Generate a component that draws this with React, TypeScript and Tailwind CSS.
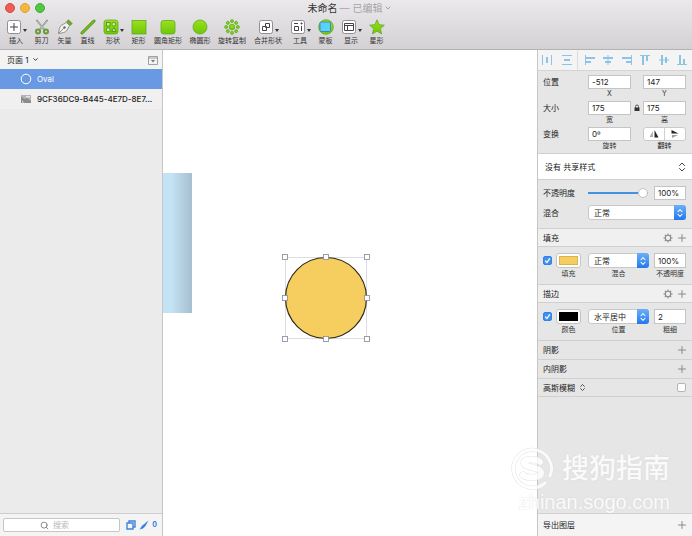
import { ReactNode, useState } from 'react';
import { ChevronDown, ChevronsUpDown, Plus, Search } from 'lucide-react';

function Swatch({ children }: { children: ReactNode }) {
  return (
    <svg viewBox="0 0 16 16" className="size-4 shrink-0">
      <defs>
        <linearGradient id="green" x1="0" y1="0" x2="0" y2="1">
          <stop offset="0" stopColor="#9be01c" />
          <stop offset="1" stopColor="#6cc808" />
        </linearGradient>
      </defs>
      {children}
    </svg>
  );
}

function Boxed({ children }: { children: ReactNode }) {
  return (
    <Swatch>
      <rect x="1.5" y="1.5" width="13" height="13" rx="2" fill="#fff" stroke="#8f8f8f" />
      <g fill="none" stroke="#444" strokeWidth="1">
        {children}
      </g>
    </Swatch>
  );
}

const greenStroke = { fill: 'url(#green)', stroke: '#62a829', strokeWidth: 0.8 };
const dots = [0, 45, 90, 135, 180, 225, 270, 315];

const tools = [
  {
    label: '插入',
    width: 'w-7',
    menu: true,
    icon: (
      <Boxed>
        <path d="M8 4v8M4 8h8" />
      </Boxed>
    ),
  },
  {
    label: '剪刀',
    width: 'w-[23px]',
    icon: (
      <Swatch>
        <path d="M2.5 1 10.5 11M13.5 1 5.5 11" stroke="#858b82" strokeWidth="1.8" fill="none" />
        <path d="M3 1.8 10 10.5M13 1.8 6 10.5" stroke="#d5dad2" strokeWidth=".7" fill="none" />
        <g fill="none" stroke="#6a9c35" strokeWidth="2">
          <circle cx="4" cy="12.5" r="2" />
          <circle cx="12" cy="12.5" r="2" />
        </g>
      </Swatch>
    ),
  },
  {
    label: '矢量',
    width: 'w-[23px]',
    icon: (
      <Swatch>
        <path d="M1.5 14.5C2 11 2.5 8 4 6.500L9.500 3.500 12.500 6.500 9.500 12C8 13.500 5 14 1.500 14.500Z" fill="#f1f2ee" stroke="#84907c" strokeWidth=".9" />
        <path d="M1.5 14.5 6.8 9.2" stroke="#777" strokeWidth=".8" />
        <circle cx="7.5" cy="8.5" r="1.2" fill="#666" />
        <path d="M9.5 2.8 11.5 .8 15.2 4.5 13.2 6.5Z" fill="#6bab25" stroke="#4c8419" strokeWidth=".6" />
      </Swatch>
    ),
  },
  {
    label: '直线',
    width: 'w-[23px]',
    icon: (
      <Swatch>
        <path d="M2 14 14 2" stroke="#4b8c15" strokeWidth="3" strokeLinecap="round" />
        <path d="M2 14 14 2" stroke="#79c516" strokeWidth="1.6" strokeLinecap="round" />
      </Swatch>
    ),
  },
  {
    label: '形状',
    width: 'w-7',
    menu: true,
    icon: (
      <Swatch>
        <rect x="1" y="1" width="14" height="14" rx="2.5" {...greenStroke} />
        <g fill="#c9f08f" stroke="#4a8a15" strokeWidth=".8">
          <rect x="3.5" y="3.5" width="3.5" height="3.5" />
          <circle cx="10.8" cy="5.2" r="1.9" />
          <rect x="3.5" y="9" width="3.5" height="3.5" rx="1" />
          <path d="m10.8 8.7 2.1 3.8H8.7Z" />
        </g>
      </Swatch>
    ),
  },
  {
    label: '矩形',
    width: 'w-[23px]',
    icon: (
      <Swatch>
        <rect x="1" y="1.5" width="14" height="13.5" {...greenStroke} />
      </Swatch>
    ),
  },
  {
    label: '圆角矩形',
    width: 'w-9',
    icon: (
      <Swatch>
        <rect x="1" y="1.5" width="14" height="13.5" rx="2.5" {...greenStroke} />
      </Swatch>
    ),
  },
  {
    label: '椭圆形',
    width: 'w-7',
    icon: (
      <Swatch>
        <circle cx="8" cy="8" r="7" {...greenStroke} />
      </Swatch>
    ),
  },
  {
    label: '旋转复制',
    width: 'w-9',
    icon: (
      <Swatch>
        <circle cx="8" cy="8" r="2.8" {...greenStroke} />
        {dots.map(angle => (
          <circle key={angle} cx="8" cy="2.1" r="1.5" transform={`rotate(${angle} 8 8)`} {...greenStroke} />
        ))}
      </Swatch>
    ),
  },
  {
    label: '合并形状',
    width: 'w-9',
    menu: true,
    icon: (
      <Boxed>
        <path d="M7.5 4.5h4v4h-4zM4.5 7.5h4v4h-4z" />
      </Boxed>
    ),
  },
  {
    label: '工具',
    width: 'w-7',
    menu: true,
    icon: (
      <Boxed>
        <path d="M4.5 7.5h4v4h-4zM4 4.5h4M11.5 7v5" />
        <path d="M10.5 4.5h2M11.5 3.5v2" />
      </Boxed>
    ),
  },
  {
    label: '蒙板',
    width: 'w-[23px]',
    icon: (
      <Swatch>
        <circle cx="8" cy="8" r="7.3" {...greenStroke} />
        <rect x="2" y="3" width="10.5" height="9.5" rx="1" fill="#5fd0f5" stroke="#2c7fb5" strokeWidth=".8" />
      </Swatch>
    ),
  },
  {
    label: '显示',
    width: 'w-7',
    menu: true,
    icon: (
      <Boxed>
        <path d="M3.5 4.5h9v7h-9zM3.5 6.5h9M6.5 6.5v5" />
      </Boxed>
    ),
  },
  {
    label: '星形',
    width: 'w-[23px]',
    icon: (
      <Swatch>
        <path d="m8 .8 2.1 4.9 5.2.5-3.9 3.5 1.2 5.2L8 12.2l-4.6 2.7 1.2-5.2L.7 6.2l5.2-.5Z" {...greenStroke} />
      </Swatch>
    ),
  },
];

// line is the guide, bars are the shapes lined up on it
const distributors = [
  { name: '水平分布', line: 'M1.5 1v10M10.5 1v10', bars: 'M6 3v6' },
  { name: '垂直分布', line: 'M1 1.5h10M1 10.5h10', bars: 'M3 6h6' },
];

const aligners = [
  { name: '左对齐', line: 'M1.5 1v10', bars: 'M2 4h9M2 8h5' },
  { name: '水平居中', line: 'M6 1v10', bars: 'M1 4h10M3 8h6' },
  { name: '右对齐', line: 'M10.5 1v10', bars: 'M1 4h9M5 8h5' },
  { name: '顶对齐', line: 'M1 1.5h10', bars: 'M4 2v9M8 2v5' },
  { name: '垂直居中', line: 'M1 6h10', bars: 'M4 1v10M8 3v6' },
  { name: '底对齐', line: 'M1 10.5h10', bars: 'M4 1v9M8 5v5' },
];

function AlignButton({ name, line, bars }: { name: string; line: string; bars: string }) {
  return (
    <button type="button" aria-label={name}>
      <svg viewBox="0 0 12 12" className="size-3" fill="none" stroke="#8dc3e4">
        <path d={line} strokeWidth="1" />
        <path d={bars} strokeWidth="2" />
      </svg>
    </button>
  );
}

function Field({ id, value, caption }: { id: string; value: string; caption: string }) {
  return (
    <div className="flex flex-col">
      <input
        id={id}
        defaultValue={value}
        className="h-[14px] w-full border border-[#c4c4c4] bg-white pl-[3px] text-[8px] leading-[10px] text-[#222] focus:outline-none"
      />
      <Caption id={id}>{caption}</Caption>
    </div>
  );
}

function Caption({ id, children }: { id: string; children: ReactNode }) {
  return (
    <label htmlFor={id} className="text-center text-[7px] leading-[10px] whitespace-nowrap text-[#333]">
      {children}
    </label>
  );
}

function Dropdown({ id, value, options }: { id: string; value: string; options: string[] }) {
  return (
    <div className="relative h-[15px]">
      <select
        id={id}
        defaultValue={value}
        className="block h-full w-full appearance-none rounded-[3px] border border-[#c8c8c8] bg-white pl-[5px] text-[8px] leading-[12px] text-[#222] focus:outline-none"
      >
        {options.map(option => (
          <option key={option}>{option}</option>
        ))}
      </select>
      <span className="pointer-events-none absolute inset-y-0 right-0 flex w-3 items-center justify-center rounded-r-[3px] bg-linear-to-b from-[#6bb0f8] to-[#2277ee] text-white">
        <ChevronsUpDown className="size-[10px]" strokeWidth={2.5} />
      </span>
    </div>
  );
}

function Tick({ id, label, checked = false }: { id: string; label: string; checked?: boolean }) {
  return (
    <span className="grid size-[9px] place-items-center *:col-start-1 *:row-start-1">
      <input
        id={id}
        type="checkbox"
        aria-label={label}
        defaultChecked={checked}
        className="peer size-[9px] appearance-none rounded-[2px] border border-[#b5b5b5] bg-white checked:border-[#3183ea] checked:bg-[#3d8ff0]"
      />
      <svg
        viewBox="0 0 9 9"
        className="pointer-events-none invisible size-[9px] peer-checked:visible"
        fill="none"
        stroke="#fff"
        strokeWidth="1.3"
      >
        <path d="m2.2 4.6 1.7 1.8 3-4" />
      </svg>
    </span>
  );
}

function AddButton({ label }: { label: string }) {
  return (
    <button type="button" aria-label={label} className="text-[#8a8a8a]">
      <Plus className="size-3" strokeWidth={2} />
    </button>
  );
}

function GearIcon() {
  return (
    <svg viewBox="0 0 10 10" className="size-[10px]" fill="none" stroke="#8c8c8c">
      <circle cx="5" cy="5" r="2.7" strokeWidth="1.1" />
      {dots.map(angle => (
        <path key={angle} d="M5 .5v1.600" strokeWidth="1.2" transform={`rotate(${angle} 5 5)`} />
      ))}
    </svg>
  );
}

function SectionBar({ title, gear = false, plain = false }: { title: string; gear?: boolean; plain?: boolean }) {
  return (
    <div
      className={`flex h-[19px] items-center gap-[3px] border-t border-[#d0d0d0] pr-1 pl-[5px] ${plain ? '' : 'border-b bg-[#f0f0f0]'}`}
    >
      <h2 className="flex-1">{title}</h2>
      {gear && (
        <button type="button" aria-label={`${title}设置`}>
          <GearIcon />
        </button>
      )}
      <AddButton label={`添加${title}`} />
    </div>
  );
}

interface PaintRowProps {
  name: string;
  color: ReactNode;
  colorCaption: string;
  mode: string;
  modes: string[];
  modeCaption: string;
  value: string;
  valueCaption: string;
}

function PaintRow({ name, color, colorCaption, mode, modes, modeCaption, value, valueCaption }: PaintRowProps) {
  return (
    <div className="grid h-[37px] grid-cols-[13px_32px_66px_32px] pt-[6px] pl-[5px]">
      <div className="pt-[3px]">
        <Tick id={`${name}-on`} label={colorCaption} checked />
      </div>
      <div className="flex w-[25px] flex-col gap-px">
        <button
          id={`${name}-color`}
          type="button"
          className="h-[15px] rounded-[3px] border border-[#c4c4c4] bg-white p-[2px]"
        >
          {color}
        </button>
        <Caption id={`${name}-color`}>{colorCaption}</Caption>
      </div>
      <div className="flex w-[61px] flex-col gap-px">
        <Dropdown id={`${name}-mode`} value={mode} options={modes} />
        <Caption id={`${name}-mode`}>{modeCaption}</Caption>
      </div>
      <div className="flex flex-col gap-px">
        <input
          id={`${name}-value`}
          defaultValue={value}
          className="h-[15px] w-full border border-[#c4c4c4] bg-white pl-[3px] text-[8px] leading-[10px] text-[#222] focus:outline-none"
        />
        <Caption id={`${name}-value`}>{valueCaption}</Caption>
      </div>
    </div>
  );
}

function Toolbar() {
  return (
    <header className="shrink-0 border-b border-[#b4b2b4] bg-linear-to-b from-[#ebe9eb] to-[#d3d1d3]">
      <div className="grid h-4 grid-cols-[1fr_auto_1fr] items-center">
        <div className="flex gap-[5px] pl-[5px]">
          <button type="button" aria-label="关闭" className="size-[10px] rounded-full border border-[#d9483f] bg-[#ee5d55]" />
          <button type="button" aria-label="最小化" className="size-[10px] rounded-full border border-[#dfa035] bg-[#f6b73e]" />
          <button type="button" aria-label="缩放" className="size-[10px] rounded-full border border-[#3fae35] bg-[#55c548]" />
        </div>
        <h1 className="flex items-center gap-0.5 pl-2 text-[10px] leading-[14px] text-[#333]">
          未命名 <span className="text-[#a5a3a5]">— 已编辑</span>
          <ChevronDown className="size-2 text-[#a5a3a5]" strokeWidth={3} />
        </h1>
      </div>
      <nav className="flex h-[33px] pt-[3px] pl-0.5">
        {tools.map(tool => (
          <button key={tool.label} type="button" className={`flex shrink-0 flex-col items-center gap-px ${tool.width}`}>
            <span className="flex items-end gap-px">
              {tool.icon}
              {tool.menu && (
                <svg viewBox="0 0 4 3" className="mb-[3px] h-[3px] w-1">
                  <path d="M0 0h4L2 3Z" fill="#333" />
                </svg>
              )}
            </span>
            <span className="text-[7px] leading-[10px] whitespace-nowrap text-[#333]">{tool.label}</span>
          </button>
        ))}
      </nav>
    </header>
  );
}

function LayerList() {
  const [selected, setSelected] = useState('Oval');
  const layers = [
    {
      name: 'Oval',
      icon: (
        <svg viewBox="0 0 12 12" className="size-3" fill="none" stroke="currentColor">
          <circle cx="6" cy="6" r="4.8" />
        </svg>
      ),
    },
    {
      name: '9CF36DC9-B445-4E7D-8E7...',
      icon: (
        <svg viewBox="0 0 12 12" className="size-3">
          <path d="M1 2h10v8H1z" fill="#b4b4b4" />
          <path d="M1 3.5 4.5 6 7 5l4 3v2H1z" fill="#8c8c8c" />
          <path d="M6 3h4v1.5H6zM2 7.5l2 2H2z" fill="#e5e5e5" />
        </svg>
      ),
    },
  ];

  return (
    <aside className="flex w-[163px] shrink-0 flex-col border-r border-[#c6c6c6] bg-[#ebebeb]">
      <div className="flex h-[19px] items-center bg-[#f3f3f3] pr-1 pl-[7px]">
        <button type="button" className="flex items-center gap-[3px]">
          页面 1 <ChevronDown className="size-[7px]" strokeWidth={3} />
        </button>
        <button type="button" aria-label="折叠页面" className="ml-auto">
          <svg viewBox="0 0 10 10" className="size-[10px]" fill="none" stroke="#8c8c8c">
            <path d="M.5 1.5h9v8h-9zM.5 3h9" strokeWidth=".8" />
            <path d="M3 5h4L5 7.5Z" fill="#777" stroke="none" />
          </svg>
        </button>
      </div>
      <ul className="flex-1">
        {layers.map(layer => (
          <li key={layer.name}>
            <button
              type="button"
              onClick={() => setSelected(layer.name)}
              className={`flex h-5 w-full items-center gap-[5px] pl-5 whitespace-nowrap ${
                selected === layer.name ? 'bg-[#6999e2] text-white' : 'bg-[#f0f0f0] font-medium text-[#222]'
              }`}
            >
              {layer.icon}
              {layer.name}
            </button>
          </li>
        ))}
      </ul>
      <div className="flex h-[23px] items-center gap-[3px] border-t border-[#cecece] bg-[#f4f4f4] pr-[5px] pl-[3px]">
        <label className="flex h-[14px] w-[117px] items-center gap-1 rounded-[2px] border border-[#c6c6c6] bg-white pl-9">
          <Search className="size-[9px] shrink-0 text-[#666]" />
          <input
            type="search"
            aria-label="搜索"
            placeholder="搜索"
            className="w-full min-w-0 text-[8px] leading-[10px] placeholder:text-[#b8b8b8] focus:outline-none"
          />
        </label>
        <div className="ml-auto flex items-center gap-[3px] text-[#3c83dc]">
          <svg viewBox="0 0 10 10" className="size-[10px]" fill="none" stroke="currentColor" strokeWidth="1.4">
            <path d="M3 3V1h6v6H7M1 3h6v6H1z" />
          </svg>
          <svg viewBox="0 0 10 10" className="size-[10px]" fill="currentColor">
            <path d="M9.5.5 6.5 6 4 8.5.5 9.5 3 5.8Z" />
          </svg>
          <span className="text-[7px] font-bold">0</span>
        </div>
      </div>
    </aside>
  );
}

const handles = [4, 45, 86];

function Canvas() {
  return (
    <main className="relative min-w-0 flex-1 overflow-hidden bg-white">
      <div className="absolute top-[123px] left-0 h-[140px] w-[29px] bg-linear-to-r from-[#c3e2f3] from-30% to-[#a6bfcf]" />
      <svg viewBox="0 0 90 90" className="absolute top-[203px] left-[118px] size-[90px]">
        <rect x="4.5" y="4.5" width="81" height="81" fill="none" stroke="#d4d4dc" strokeWidth=".8" />
        <circle cx="45" cy="45" r="40.5" fill="#f6ce5f" stroke="#2e2a1c" strokeWidth="1.2" />
        {handles.map(y =>
          handles
            .filter(x => x !== 45 || y !== 45)
            .map(x => (
              <rect key={`${x}-${y}`} x={x - 2.5} y={y - 2.5} width="5" height="5" fill="#fff" stroke="#9293a0" strokeWidth=".9" />
            )),
        )}
      </svg>
    </main>
  );
}

function Inspector() {
  const rowLabel = 'pt-px leading-[12px]';
  const modes = ['正常', '变暗', '正片叠底', '变亮', '滤色'];

  return (
    <aside className="flex w-[155px] shrink-0 flex-col border-l border-[#c6c6c6] bg-[#e6e6e6]">
      <div className="flex h-[21px] items-center border-b border-[#d4d4d4] bg-[#f4f4f4] pr-1 pl-[3px]">
        <div className="flex gap-2">
          {distributors.map(item => (
            <AlignButton key={item.name} {...item} />
          ))}
        </div>
        <span className="mx-1 h-[19px] w-px bg-[#dcdcdc]" />
        <div className="flex flex-1 justify-between pl-0.5">
          {aligners.map(item => (
            <AlignButton key={item.name} {...item} />
          ))}
        </div>
      </div>

      <div className="grid grid-cols-[45px_43px_12px_43px] gap-y-0.5 pt-1 pb-0.5 pl-[5px]">
        <h2 className={rowLabel}>位置</h2>
        <Field id="x" value="-512" caption="X" />
        <span />
        <Field id="y" value="147" caption="Y" />

        <h2 className={rowLabel}>大小</h2>
        <Field id="width" value="175" caption="宽" />
        <button type="button" aria-label="锁定比例" className="flex h-[14px] items-center justify-center">
          <svg viewBox="0 0 6 8" className="h-2 w-[6px]">
            <path d="M1.500 4V2.500a1.500 1.500 0 0 1 3 0V4" fill="none" stroke="#444" strokeWidth=".9" />
            <path d="M.500 3.500h5V7h-5z" fill="#333" />
          </svg>
        </button>
        <Field id="height" value="175" caption="高" />

        <h2 className={rowLabel}>变换</h2>
        <Field id="rotate" value="0º" caption="旋转" />
        <span />
        <div className="flex flex-col">
          <div className="flex h-[14px] divide-x divide-[#d0d0d0] rounded-[3px] border border-[#cacaca] bg-white">
            <button type="button" aria-label="水平翻转" className="flex flex-1 items-center justify-center">
              <svg viewBox="0 0 10 8" className="h-2 w-[10px]">
                <path d="M4 1v6H.5z" fill="#b0b0b0" />
                <path d="M5.500 0v7.500h4z" fill="#222" />
              </svg>
            </button>
            <button type="button" aria-label="垂直翻转" className="flex flex-1 items-center justify-center">
              <svg viewBox="0 0 8 10" className="h-[10px] w-2">
                <path d="M.500 4.500h7L.500 1z" fill="#222" />
                <path d="M1 6h6L1 9z" fill="#a0a0a0" />
              </svg>
            </button>
          </div>
          <span className="text-center text-[7px] leading-[10px]">翻转</span>
        </div>
      </div>

      <div className="relative h-[27px] border-y border-[#d0d0d0] bg-white">
        <select
          aria-label="共享样式"
          className="block h-full w-full appearance-none pl-[7px] text-[8px] leading-[12px] focus:outline-none"
        >
          <option>没有 共享样式</option>
        </select>
        <ChevronsUpDown className="pointer-events-none absolute top-[7px] right-1 size-3 text-[#444]" />
      </div>

      <div className="flex h-12 flex-col gap-[5px] pt-[6px] pl-[5px]">
        <div className="grid grid-cols-[45px_66px_32px] items-center">
          <label htmlFor="opacity">不透明度</label>
          <input
            id="opacity"
            type="range"
            defaultValue={100}
            className="h-[10px] w-[60px] appearance-none bg-transparent [&::-webkit-slider-runnable-track]:h-[2px] [&::-webkit-slider-runnable-track]:bg-[#4391e3] [&::-webkit-slider-thumb]:-mt-1 [&::-webkit-slider-thumb]:size-[10px] [&::-webkit-slider-thumb]:appearance-none [&::-webkit-slider-thumb]:rounded-full [&::-webkit-slider-thumb]:border [&::-webkit-slider-thumb]:border-[#c0c0c0] [&::-webkit-slider-thumb]:bg-white"
          />
          <input
            aria-label="不透明度数值"
            defaultValue="100%"
            className="h-[14px] w-full border border-[#c4c4c4] bg-white pl-[3px] text-[8px] leading-[10px] focus:outline-none"
          />
        </div>
        <div className="grid grid-cols-[45px_98px] items-center">
          <label htmlFor="blend">混合</label>
          <Dropdown id="blend" value="正常" options={modes} />
        </div>
      </div>

      <SectionBar title="填充" gear />
      <PaintRow
        name="fill"
        color={<span className="block h-full border border-[#d8b354] bg-[#f6ce5f]" />}
        colorCaption="填充"
        mode="正常"
        modes={modes}
        modeCaption="混合"
        value="100%"
        valueCaption="不透明度"
      />
      <SectionBar title="描边" gear />
      <PaintRow
        name="border"
        color={<span className="block h-full bg-black" />}
        colorCaption="颜色"
        mode="水平居中"
        modes={['内部', '水平居中', '外部']}
        modeCaption="位置"
        value="2"
        valueCaption="粗细"
      />
      <SectionBar title="阴影" plain />
      <SectionBar title="内阴影" plain />
      <div className="flex h-[19px] items-center border-y border-[#d0d0d0] pr-[6px] pl-[5px]">
        <button type="button" className="flex items-center gap-[3px]">
          高斯模糊 <ChevronsUpDown className="size-[9px]" />
        </button>
        <span className="ml-auto">
          <Tick id="blur" label="高斯模糊" />
        </span>
      </div>

      <div className="mt-auto flex h-[23px] items-center border-t border-[#d0d0d0] bg-[#f4f4f4] pr-1 pl-[5px]">
        <h2 className="flex-1">导出图层</h2>
        <AddButton label="添加导出" />
      </div>
    </aside>
  );
}

function Watermark() {
  return (
    <div className="pointer-events-none absolute right-[22px] bottom-[23px] flex flex-col items-end text-white opacity-80 [text-shadow:0_0_2px_#d4d4d4]">
      <div className="flex items-center gap-2">
        <svg viewBox="0 0 44 44" className="size-11" fill="none" strokeLinecap="round">
          <g stroke="#dedede">
            <path d="M35 36a19 19 0 1 1 5-7" strokeWidth="4" />
            <path d="M30 15c-5-4-17-3-16 1 1 5 17 4 17 10 0 5-13 6-18 2" strokeWidth="7" />
          </g>
          <g stroke="#fff">
            <path d="M35 36a19 19 0 1 1 5-7" strokeWidth="3" />
            <path d="M30 15c-5-4-17-3-16 1 1 5 17 4 17 10 0 5-13 6-18 2" strokeWidth="6" />
          </g>
        </svg>
        <span className="text-[27px] leading-[40px] font-medium">搜狗指南</span>
      </div>
      <span className="font-['Liberation_Sans',sans-serif] text-[20px] leading-[22px]">zhinan.sogo.com</span>
    </div>
  );
}

export default function App() {
  return (
    <div className="relative flex h-screen flex-col overflow-hidden bg-white font-['Inter','Noto_Sans_CJK_SC',sans-serif] text-[8px] leading-[12px] text-[#222]">
      <Toolbar />
      <div className="flex min-h-0 flex-1">
        <LayerList />
        <Canvas />
        <Inspector />
      </div>
      <Watermark />
    </div>
  );
}
